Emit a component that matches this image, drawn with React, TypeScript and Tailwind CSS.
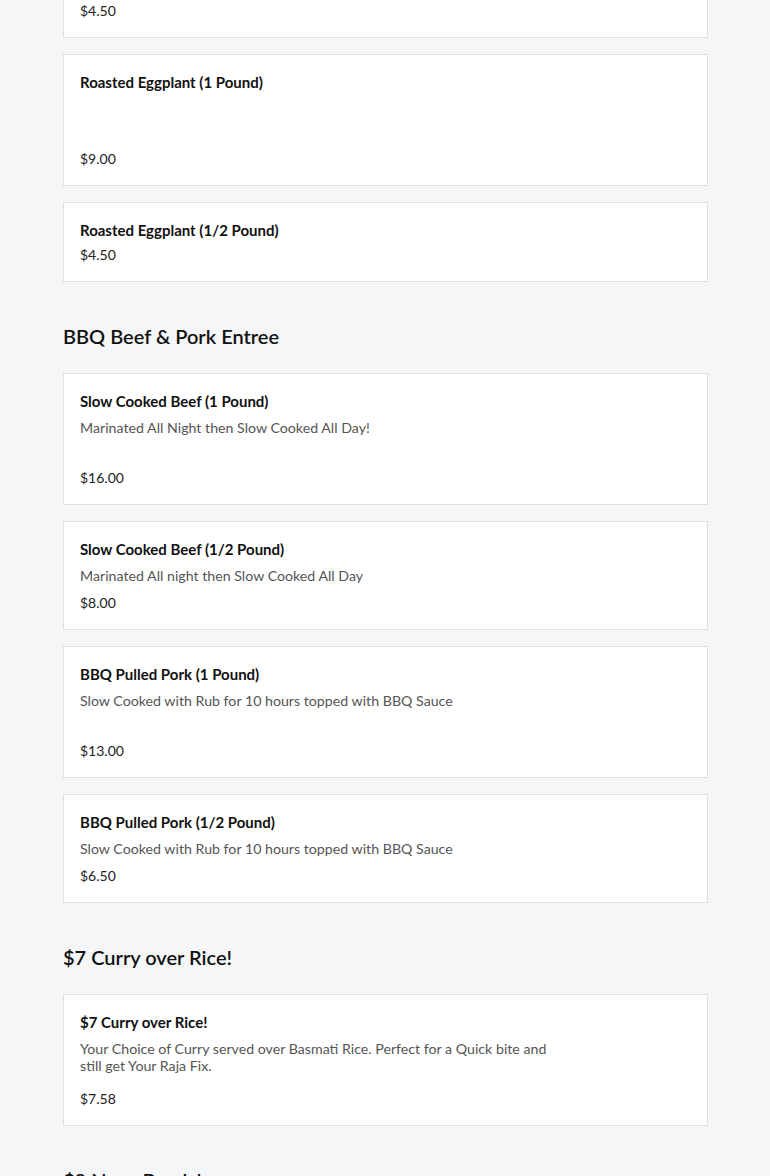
import React from "react";

type Item = { title: string; desc?: string; price: string; tall?: boolean };

function Card({ item, first }: { item: Item; first?: boolean }) {
  return (
    <div
      className={
        "bg-white border border-[#dfe0e2] px-4 py-[15px] " + (first ? "mt-[-42px]" : "")
      }
    >
      <div className="text-[15px] leading-[24px] font-bold text-[#111]">{item.title}</div>
      {item.tall ? (
        <>
          <div className="mt-[6px] h-[34px] max-w-[470px] text-[14.2px] leading-[17px] text-[#555]">
            {item.desc}
          </div>
          <div className="mt-[14px] text-[14px] leading-[22px] text-[#222]">{item.price}</div>
        </>
      ) : item.desc ? (
        <>
          <div className="mt-[6px] text-[14.2px] leading-[17px] text-[#555]">{item.desc}</div>
          <div className="mt-[8px] text-[14px] leading-[22px] text-[#222]">{item.price}</div>
        </>
      ) : (
        <div className="mt-[2px] text-[14px] leading-[22px] text-[#222]">{item.price}</div>
      )}
    </div>
  );
}

function Section({ title, items }: { title: string; items: Item[] }) {
  return (
    <div className="pt-[40px]">
      <h2 className="text-[20px] leading-[28px] font-semibold text-[#111] mb-[23px]">{title}</h2>
      <div className="flex flex-col gap-4">
        {items.map((it, i) => (
          <Card key={i} item={it} />
        ))}
      </div>
    </div>
  );
}

export default function App() {
  return (
    <div
      className="h-[1176px] bg-[#f5f6f7] overflow-hidden"
      style={{ fontFamily: "Lato, 'Noto Sans', sans-serif" }}
    >
      <div className="mx-[63px] w-[645px]">
        <div className="flex flex-col gap-4">
          <Card first item={{ title: "Roasted Cauliflower (1/2 Pound)", price: "$4.50" }} />
          <Card item={{ title: "Roasted Eggplant (1 Pound)", desc: "", price: "$9.00", tall: true }} />
          <Card item={{ title: "Roasted Eggplant (1/2 Pound)", price: "$4.50" }} />
        </div>
        <Section
          title="BBQ Beef & Pork Entree"
          items={[
            {
              title: "Slow Cooked Beef (1 Pound)",
              desc: "Marinated All Night then Slow Cooked All Day!",
              price: "$16.00",
              tall: true,
            },
            {
              title: "Slow Cooked Beef (1/2 Pound)",
              desc: "Marinated All night then Slow Cooked All Day",
              price: "$8.00",
            },
            {
              title: "BBQ Pulled Pork (1 Pound)",
              desc: "Slow Cooked with Rub for 10 hours topped with BBQ Sauce",
              price: "$13.00",
              tall: true,
            },
            {
              title: "BBQ Pulled Pork (1/2 Pound)",
              desc: "Slow Cooked with Rub for 10 hours topped with BBQ Sauce",
              price: "$6.50",
            },
          ]}
        />
        <Section
          title="$7 Curry over Rice!"
          items={[
            {
              title: "$7 Curry over Rice!",
              desc: "Your Choice of Curry served over Basmati Rice. Perfect for a Quick bite and still get Your Raja Fix.",
              price: "$7.58",
              tall: true,
            },
          ]}
        />
        <Section
          title="$8 Naan Bowls!"
          items={[{ title: "Naan Bowl", desc: "", price: "$8.00" }]}
        />
      </div>
    </div>
  );
}
